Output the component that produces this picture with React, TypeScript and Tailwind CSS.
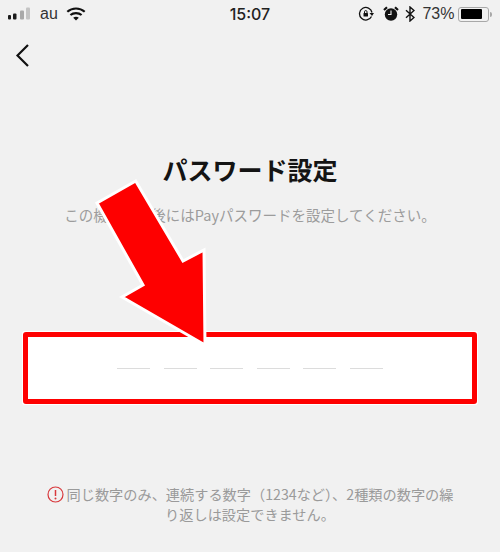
import React from "react";

function Signal() {
  return (
    <svg width="23" height="14" viewBox="0 0 23 14">
      <rect x="0" y="8" width="3" height="4.500" rx="1" fill="#1c1c1c" />
      <rect x="5" y="6.500" width="3.500" height="6" rx="1" fill="#1c1c1c" />
      <rect x="12" y="3.500" width="4" height="9" rx="1" fill="#a9a9a9" />
      <rect x="18" y="0.500" width="4" height="12" rx="1" fill="#c4c4c4" />
    </svg>
  );
}

function Wifi() {
  return (
    <svg width="20" height="14" viewBox="0 0 20 14" fill="none" stroke="#111" strokeWidth="2.200">
      <path d="M1.300 4.800C6.200 .4 13.800 .4 18.700 4.800" />
      <path d="M4.400 8C7.500 5.400 12.500 5.400 15.600 8" />
      <path d="M10 13.500L7.200 10.700C8.800 9.500 11.200 9.500 12.800 10.700Z" fill="#111" stroke="none" />
    </svg>
  );
}

function Rotation() {
  return (
    <svg width="16" height="16" viewBox="0 0 16 16" fill="none" stroke="#111">
      <path d="M13.500 10.500A6.300 6.300 0 1 1 14 6.500" strokeWidth="1.300" />
      <path d="M16 7H11.500L14 10Z" fill="#111" stroke="none" />
      <rect x="5.500" y="7" width="4.500" height="3.500" rx=".5" fill="#111" stroke="none" />
      <path d="M6.500 7V5.800a1.250 1.250 0 0 1 2.500 0V7" strokeWidth="1" />
    </svg>
  );
}

function Alarm() {
  return (
    <svg width="16" height="16" viewBox="0 0 16 16">
      <circle cx="8" cy="8.500" r="6.200" fill="#111" />
      <path d="M8 4.500V8.500H5" stroke="#f2f2f2" strokeWidth="1.100" fill="none" />
      <path d="M1 4L4 1.200M15 4L12 1.200" stroke="#111" strokeWidth="2.200" />
    </svg>
  );
}

function Bluetooth() {
  return (
    <svg width="10" height="16" viewBox="0 0 10 16" fill="none" stroke="#111" strokeWidth="1.400">
      <path d="M1 4.200L9 11.500L5 15V1L9 4.500L1 11.800" />
    </svg>
  );
}

function Battery() {
  return (
    <div className="flex items-center">
      <div className="w-[31px] h-[15px] rounded-[3px] border border-[#a8a8a8] p-[1.500px]">
        <div className="h-full w-[21px] rounded-[1px] bg-black" />
      </div>
      <div className="w-[1.500px] h-[5px] bg-[#a8a8a8] ml-[1px] rounded-r-sm" />
    </div>
  );
}

export default function App() {
  return (
    <div className="relative w-[500px] h-[552px] overflow-hidden bg-[#f1f1f1] flex flex-col">
      <div className="h-[28px] shrink-0 grid grid-cols-3 items-center pl-[8px] pr-[8px] font-['Liberation_Sans',sans-serif] text-[#1a1a1a]">
        <div className="flex items-center">
          <Signal />
          <span className="text-[16px] text-[#333] ml-[9px]">au</span>
          <span className="ml-[8px]"><Wifi /></span>
        </div>
        <div className="text-center text-[16px] font-medium text-[#222] font-['Inter',sans-serif]">15:07</div>
        <div className="flex items-center justify-end gap-[6px] text-[#222]">
          <span className="mr-[3px]"><Rotation /></span>
          <Alarm />
          <Bluetooth />
          <span className="text-[16px] ml-[1px] mr-[-2px] text-[#333]">73%</span>
          <Battery />
        </div>
      </div>

      <div className="pl-[14px] pt-[14px] h-[42px] shrink-0">
        <svg width="18" height="26" viewBox="0 0 18 26" fill="none" stroke="#111" strokeWidth="2.200">
          <path d="M14 3L3.500 13.500L14 24" />
        </svg>
      </div>

      <h1 className="mt-[84px] h-[30px] text-center text-[25px] leading-[30px] font-bold text-[#141414] font-['Noto_Sans_CJK_JP',sans-serif]">
        パスワード設定
      </h1>

      <p className="mt-[21px] h-[20px] text-center text-[14.500px] leading-[20px] text-[#9c9c9c] font-['Noto_Sans_CJK_JP',sans-serif]">
        この機種変更後にはPayパスワードを設定してください。
      </p>

      <div className="mt-[106px] mx-[22px] h-[74px] bg-white border-[1.500px] border-white rounded-[2px] shrink-0">
        <div className="h-full border-[5px] border-[#fe0000] rounded-[3px] flex items-center justify-center gap-[13.500px]">
          {[0, 1, 2, 3, 4, 5].map((i) => (
            <div key={i} className="w-[33px] h-[1.500px] bg-[#dcdcdc] mt-[1px]" />
          ))}
        </div>
      </div>

      <div className="mt-[80px] text-center text-[14.200px] leading-[19.500px] text-[#9a9a9a] font-['Noto_Sans_CJK_JP',sans-serif]">
        <span className="inline-flex align-[-3px] mr-[3px]">
          <svg width="17" height="17" viewBox="0 0 17 17" fill="none">
            <circle cx="8.500" cy="8.500" r="7.500" stroke="#d8383c" strokeWidth="1.200" />
            <path d="M8.500 4V10" stroke="#d8383c" strokeWidth="1.500" />
            <circle cx="8.500" cy="12.500" r="1" fill="#d8383c" />
          </svg>
        </span>
        同じ数字のみ、連続する数字（1234など）、2種類の数字の繰
        <br />
        り返しは設定できません。
      </div>

      <svg className="absolute left-0 top-0 pointer-events-none" width="500" height="552" viewBox="0 0 500 552">
        <polygon
          points="135.700,181 97,203 143,285 122,297 205,345 204,250 183,261"
          fill="#fe0000"
          stroke="#ffffff"
          strokeWidth="3"
          strokeLinejoin="miter"
        />
      </svg>
    </div>
  );
}
